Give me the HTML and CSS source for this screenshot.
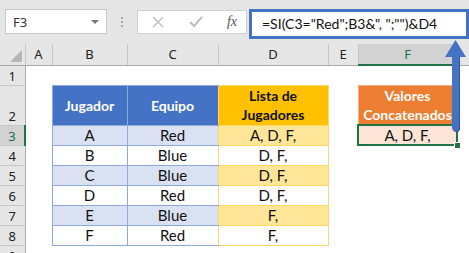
FILE: index.html
```html
<!DOCTYPE html>
<html lang="es">
  <head>
    <meta charset="UTF-8" />
    <title>SI concatenar</title>
    <link rel="stylesheet" href="styles.css">
  </head>
  <body>
    <div class="formula-bar">
      <div class="namebox">
        <span>F3</span>
        <span class="caret"></span>
      </div>
      <div class="grip">
        <span></span><span></span><span></span>
      </div>
      <div class="fx-buttons">
        <svg width="14" height="12" viewBox="0 0 14 12">
          <path d="M2 1 L12 11 M12 1 L2 11" stroke="#bdbdbd" stroke-width="1.4" fill="none" />
        </svg>
        <svg width="14" height="12" viewBox="0 0 14 12">
          <path d="M1 6 L5 10 L13 1" stroke="#bdbdbd" stroke-width="2" fill="none" />
        </svg>
        <span class="fx">fx</span>
      </div>
      <div class="formula">=SI(C3="Red";B3&amp;", ";"")&amp;D4</div>
    </div>

    <table class="sheet">
      <colgroup>
        <col class="c-rh" />
        <col class="c-a" />
        <col class="c-b" />
        <col class="c-c" />
        <col class="c-d" />
        <col class="c-e" />
        <col class="c-f" />
        <col class="c-g" />
      </colgroup>
      <thead>
        <tr>
          <th class="corner"><span></span></th>
          <th>A</th>
          <th>B</th>
          <th>C</th>
          <th>D</th>
          <th>E</th>
          <th class="active">F</th>
          <th></th>
        </tr>
      </thead>
      <tbody>
        <tr>
          <th>1</th>
          <td></td><td></td><td></td><td></td><td></td><td></td><td></td>
        </tr>
        <tr class="tall">
          <th>2</th>
          <td></td>
          <td class="blue head">Jugador</td>
          <td class="blue head last">Equipo</td>
          <td class="gold head">Lista de<br />Jugadores</td>
          <td></td>
          <td class="orange head">Valores<br />Concatenados</td>
          <td></td>
        </tr>
        <tr class="band">
          <th class="active">3</th>
          <td></td>
          <td class="blue">A</td>
          <td class="blue last">Red</td>
          <td class="gold">A, D, F,</td>
          <td></td>
          <td class="orange sel">A, D, F,</td>
          <td></td>
        </tr>
        <tr>
          <th>4</th>
          <td></td>
          <td class="blue">B</td>
          <td class="blue last">Blue</td>
          <td class="gold">D, F,</td>
          <td></td><td></td><td></td>
        </tr>
        <tr class="band">
          <th>5</th>
          <td></td>
          <td class="blue">C</td>
          <td class="blue last">Blue</td>
          <td class="gold">D, F,</td>
          <td></td><td></td><td></td>
        </tr>
        <tr>
          <th>6</th>
          <td></td>
          <td class="blue">D</td>
          <td class="blue last">Red</td>
          <td class="gold">D, F,</td>
          <td></td><td></td><td></td>
        </tr>
        <tr class="band">
          <th>7</th>
          <td></td>
          <td class="blue">E</td>
          <td class="blue last">Blue</td>
          <td class="gold">F,</td>
          <td></td><td></td><td></td>
        </tr>
        <tr>
          <th>8</th>
          <td></td>
          <td class="blue">F</td>
          <td class="blue last">Red</td>
          <td class="gold">F,</td>
          <td></td><td></td><td></td>
        </tr>
        <tr>
          <th>9</th>
          <td></td><td></td><td></td><td></td><td></td><td></td><td></td>
        </tr>
      </tbody>
    </table>

    <!-- annotation arrow pointing at the formula -->
    <svg class="arrow" width="26" height="94" viewBox="0 0 26 94">
      <rect x="9" y="14" width="7" height="78" rx="3.5" fill="#2f5597" />
      <rect x="8" y="14" width="7" height="77" rx="3.5" fill="#4472c4" />
      <polygon points="11.5,0 1,17 22,17" fill="#4472c4" />
    </svg>
  </body>
</html>
```

FILE: styles.css
```css
body {
  margin: 0;
  width: 469px;
  height: 253px;
  overflow: hidden;
  position: relative;
  background-color: #ffffff;
  font-family: "Lato", "Liberation Sans", sans-serif;
  color: #111;
}

.formula-bar {
  display: flex;
  align-items: flex-start;
  height: 44px;
  box-sizing: border-box;
  padding: 9px 0 0 5px;
  background-color: #e6e6e6;
}

.namebox {
  width: 102px;
  height: 25px;
  box-sizing: border-box;
  border: 1px solid #c8c8c8;
  background-color: #fff;
  display: flex;
  align-items: center;
  justify-content: space-between;
  padding: 0 7px;
  font-family: "Noto Sans", sans-serif;
  font-size: 13px;
  color: #333;
}
.caret {
  width: 0;
  height: 0;
  border-left: 4px solid transparent;
  border-right: 4px solid transparent;
  border-top: 4px solid #777;
}

.grip {
  width: 30px;
  height: 25px;
  display: flex;
  flex-direction: column;
  align-items: center;
  justify-content: center;
  gap: 2px;
}
.grip span {
  width: 2px;
  height: 2px;
  background-color: #a9a9a9;
}

.fx-buttons {
  width: 110px;
  height: 24px;
  margin-top: 1px;
  box-sizing: border-box;
  border: 1px solid #d0d0d0;
  background-color: #fff;
  display: flex;
  align-items: center;
  justify-content: space-between;
  padding: 0 9px 0 13px;
}
.fx {
  font-family: "Liberation Serif", serif;
  font-style: italic;
  font-size: 14px;
  color: #555;
}

.formula {
  flex: 1;
  height: 30px;
  margin-left: 2px;
  box-sizing: border-box;
  border: 3px solid #4472c4;
  background-color: #fff;
  padding-left: 10px;
  font-size: 14px;
  line-height: 23px;
  white-space: nowrap;
  color: #111;
}

.sheet {
  table-layout: fixed;
  border-collapse: collapse;
  width: 480px;
}
.c-rh { width: 25px; }
.c-a { width: 27px; }
.c-b { width: 75px; }
.c-c { width: 91px; }
.c-d { width: 110px; }
.c-e { width: 30px; }
.c-f { width: 99px; }
.c-g { width: 23px; }

.sheet tr {
  height: 20px;
}
.sheet tr.tall {
  height: 40px;
}

.sheet th {
  padding: 0;
  background-color: #e6e6e6;
  font-family: "Noto Sans", sans-serif;
  font-weight: normal;
  font-size: 13px;
  color: #222;
}
.sheet thead th {
  border-right: 1px solid #c6c6c6;
  border-bottom: 1px solid #ababab;
  height: 20px;
}
.sheet tbody th {
  border-right: 1px solid #ababab;
  border-bottom: 1px solid #c6c6c6;
  vertical-align: bottom;
  padding-bottom: 1px;
  line-height: 16px;
}
.sheet th.active {
  background-color: #d2d2d2;
  color: #217346;
}
.sheet thead th.active {
  border-bottom: 2px solid #217346;
}
.sheet tbody th.active {
  border-right: 2px solid #217346;
}

.corner {
  position: relative;
}
.corner span {
  position: absolute;
  right: 3px;
  bottom: 3px;
  width: 0;
  height: 0;
  border-left: 12px solid transparent;
  border-bottom: 12px solid #b5b5b5;
}

.sheet td {
  padding: 0;
  text-align: center;
  font-size: 15px;
  line-height: 19px;
  white-space: nowrap;
}
.sheet td.head {
  font-weight: bold;
  font-size: 14px;
}

.blue {
  border: 1px solid #8eaadb;
}
.blue.last {
  border-right: none;
}
.blue.head {
  background-color: #4472c4;
  color: #fff;
}
.band .blue {
  background-color: #d9e1f2;
}

.gold {
  border: 1px solid #ffd966;
}
.gold.head {
  background-color: #ffc000;
}
.band .gold {
  background-color: #ffe699;
}

.orange {
  border: 1px solid #f4b084;
}
.orange.head {
  background-color: #ed7d31;
  color: #fff;
}
.band .orange {
  background-color: #fce4d6;
}

.sel {
  position: relative;
}
.sel::after {
  content: "";
  position: absolute;
  top: -2px;
  left: -2px;
  right: -1px;
  bottom: -1px;
  border: 2px solid #217346;
}
.sel::before {
  content: "";
  position: absolute;
  right: -4px;
  bottom: -4px;
  width: 5px;
  height: 5px;
  background-color: #217346;
  border: 1px solid #fff;
  z-index: 1;
}

.arrow {
  position: absolute;
  left: 444px;
  top: 40px;
}
```
